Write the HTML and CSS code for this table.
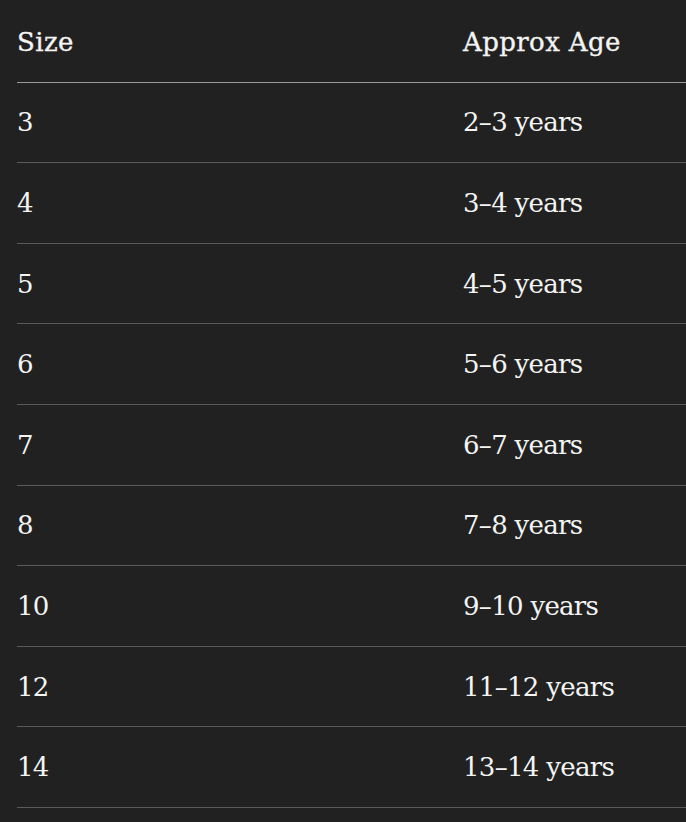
FILE: index.html
```html
<!DOCTYPE html>
<html lang="en">
<head>
<meta charset="utf-8">
<title>Size chart</title>
<link rel="stylesheet" href="styles.css">
</head>
<body>
<div class="chart">
  <div class="row head"><div class="cell">Size</div><div class="cell">Approx Age</div></div>
  <div class="row"><div class="cell">3</div><div class="cell">2–3 years</div></div>
  <div class="row"><div class="cell">4</div><div class="cell">3–4 years</div></div>
  <div class="row"><div class="cell">5</div><div class="cell">4–5 years</div></div>
  <div class="row"><div class="cell">6</div><div class="cell">5–6 years</div></div>
  <div class="row"><div class="cell">7</div><div class="cell">6–7 years</div></div>
  <div class="row"><div class="cell">8</div><div class="cell">7–8 years</div></div>
  <div class="row"><div class="cell">10</div><div class="cell">9–10 years</div></div>
  <div class="row"><div class="cell">12</div><div class="cell">11–12 years</div></div>
  <div class="row"><div class="cell">14</div><div class="cell">13–14 years</div></div>
</div>
</body>
</html>
```
FILE: styles.css
```css
html, body {
  margin: 0;
  padding: 0;
  background: #212121;
}
body {
  color: #f4f4f2;
  font-family: "DejaVu Serif", "Liberation Serif", serif;
  font-size: 26px;
  overflow: hidden;
}
.chart {
  padding: 2px 0 0 17px;
}
.row {
  display: grid;
  grid-template-columns: 446px 1fr;
  align-items: center;
  height: 79.6px;
  border-bottom: 1px solid #5a5a5a;
  letter-spacing: -0.7px;
}
.row.head {
  border-bottom-color: #9a9a9a;
  letter-spacing: 0.4px;
  -webkit-text-stroke: 0.35px #f4f4f2;
}
.cell {
  white-space: nowrap;
}
```
